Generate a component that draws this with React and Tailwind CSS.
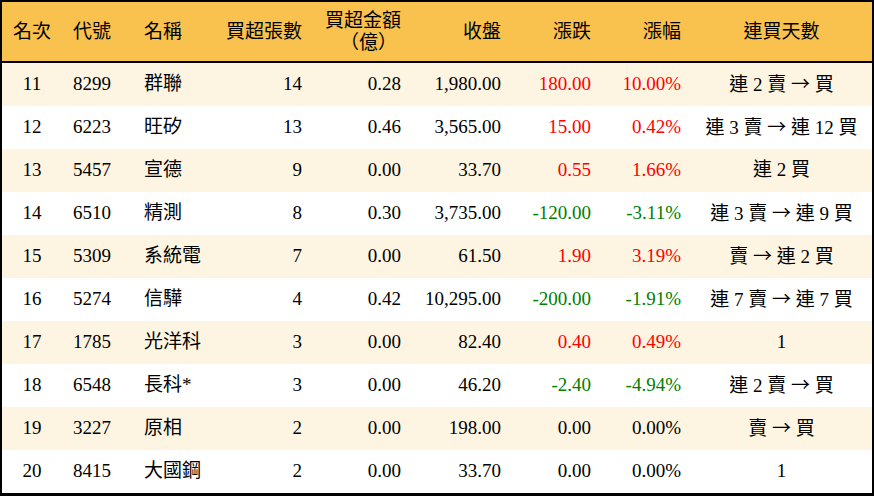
import React from "react";

const rows = [
  ["11", "8299", "群聯", "14", "0.28", "1,980.00", "180.00", "10.00%", "連 2 賣 → 買", "r"],
  ["12", "6223", "旺矽", "13", "0.46", "3,565.00", "15.00", "0.42%", "連 3 賣 → 連 12 買", "r"],
  ["13", "5457", "宣德", "9", "0.00", "33.70", "0.55", "1.66%", "連 2 買", "r"],
  ["14", "6510", "精測", "8", "0.30", "3,735.00", "-120.00", "-3.11%", "連 3 賣 → 連 9 買", "g"],
  ["15", "5309", "系統電", "7", "0.00", "61.50", "1.90", "3.19%", "賣 → 連 2 買", "r"],
  ["16", "5274", "信驊", "4", "0.42", "10,295.00", "-200.00", "-1.91%", "連 7 賣 → 連 7 買", "g"],
  ["17", "1785", "光洋科", "3", "0.00", "82.40", "0.40", "0.49%", "1", "r"],
  ["18", "6548", "長科*", "3", "0.00", "46.20", "-2.40", "-4.94%", "連 2 賣 → 買", "g"],
  ["19", "3227", "原相", "2", "0.00", "198.00", "0.00", "0.00%", "賣 → 買", "k"],
  ["20", "8415", "大國鋼", "2", "0.00", "33.70", "0.00", "0.00%", "1", "k"],
];

const grid = "grid grid-cols-[60px_60px_90px_100px_99px_100px_90px_90px_181px]";

function Days({ text }) {
  const parts = text.split("→");
  if (parts.length === 1) return <>{text}</>;
  return (
    <>
      {parts[0]}
      <span className="font-['Noto_Sans_CJK_TC',sans-serif]">→</span>
      {parts[1]}
    </>
  );
}

export default function App() {
  return (
    <div className="w-[874px] h-[496px] bg-white font-['Liberation_Serif','Noto_Sans_CJK_TC',serif] text-[19px] text-black">
      <div className="border-2 border-b-[3px] border-black h-[496px] overflow-hidden">
        <div className={`${grid} h-[59px] bg-[#F9C14E] border-b-2 border-black box-content items-center leading-[22px]`}>
          <div className="text-center">名次</div>
          <div className="text-center">代號</div>
          <div className="pl-[22px]">名稱</div>
          <div className="text-right pr-[10px]">買超張數</div>
          <div className="text-right pr-[10px]">
            <div>買超金額</div>
            <div className="pr-[4px]">（億）</div>
          </div>
          <div className="text-right pr-[10px]">收盤</div>
          <div className="text-right pr-[10px]">漲跌</div>
          <div className="text-right pr-[10px]">漲幅</div>
          <div className="text-center">連買天數</div>
        </div>
        {rows.map((r, i) => {
          const c = r[9] === "r" ? "text-[#FF0000]" : r[9] === "g" ? "text-[#008000]" : "text-black";
          return (
            <div
              key={r[0]}
              className={`${grid} h-[43px] items-center ${i % 2 === 0 ? "bg-[#FDF5E1]" : "bg-white"}`}
            >
              <div className="text-center">{r[0]}</div>
              <div className="text-center">{r[1]}</div>
              <div className="pl-[22px] whitespace-nowrap">{r[2]}</div>
              <div className="text-right pr-[10px]">{r[3]}</div>
              <div className="text-right pr-[10px]">{r[4]}</div>
              <div className="text-right pr-[10px]">{r[5]}</div>
              <div className={`text-right pr-[10px] ${c}`}>{r[6]}</div>
              <div className={`text-right pr-[10px] ${c}`}>{r[7]}</div>
              <div className="text-center whitespace-nowrap">
                <Days text={r[8]} />
              </div>
            </div>
          );
        })}
      </div>
    </div>
  );
}
